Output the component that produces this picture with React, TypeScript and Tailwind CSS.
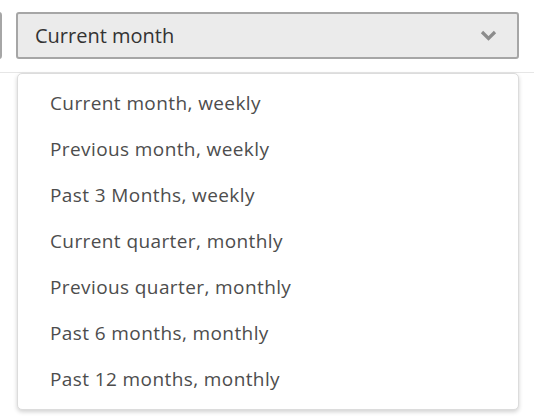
import { useState } from 'react';

const options = [
  'Current month, weekly',
  'Previous month, weekly',
  'Past 3 Months, weekly',
  'Current quarter, monthly',
  'Previous quarter, monthly',
  'Past 6 months, monthly',
  'Past 12 months, monthly',
];

export default function App() {
  const [value] = useState('Current month');

  return (
    <div className="relative w-[534px] h-[420px] bg-white overflow-hidden" style={{ fontFamily: '"Open Sans", Lato, sans-serif' }}>
      {/* header row */}
      <div className="flex items-start h-[73px] border-b border-[#e6e6e6] pt-[12px]">
        <div className="w-[3px] h-[47px] bg-[#ebebeb] border-r-2 border-[#a6a6a6] rounded-r-[3px] -ml-px" />
        <button className="ml-[14px] w-[503px] h-[47px] flex items-center justify-between bg-[#ebebeb] border-2 border-[#a6a6a6] rounded-[3px] pl-[17px] pr-[20px]">
          <span className="text-[20px] text-[#333]">{value}</span>
          <svg width="17" height="11" viewBox="0 0 17 11" fill="none">
            <path d="M2 2l6.5 6.5L15 2" stroke="#8c8c8c" strokeWidth="3.2" />
          </svg>
        </button>
      </div>

      {/* dropdown menu */}
      <div className="absolute left-[17px] top-[73px] w-[502px] h-[337px] bg-white border border-[#dcdcdc] rounded-[5px] shadow-[0_2px_4px_rgba(0,0,0,0.18)] pt-[6px]">
        <ul className="flex flex-col">
          {options.map(o => (
            <li key={o} className="h-[46px] flex items-center pl-[32px] text-[19px] tracking-[0.4px] text-[#4d4d4d]">
              {o}
            </li>
          ))}
        </ul>
      </div>
    </div>
  );
}
